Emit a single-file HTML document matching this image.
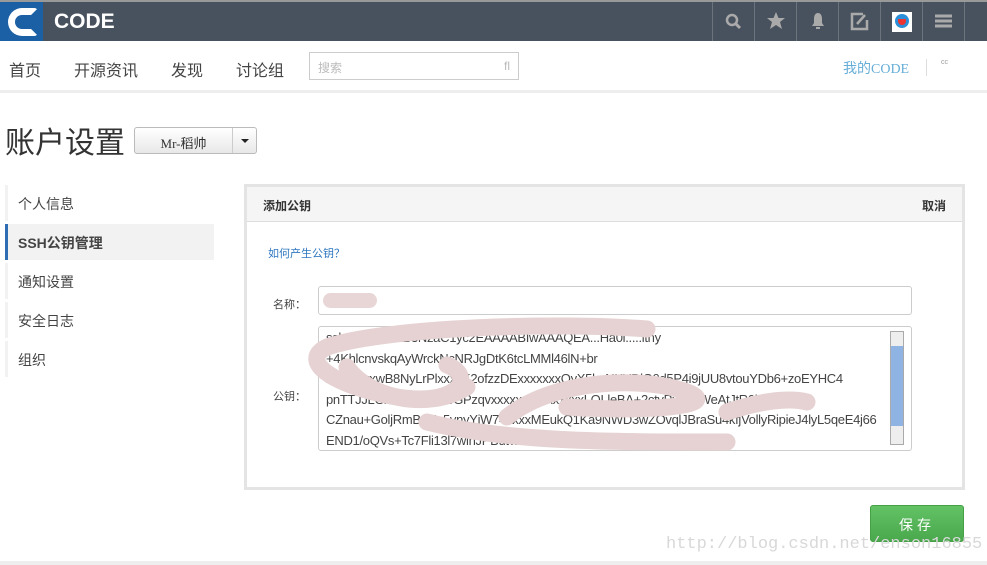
<!DOCTYPE html>
<html><head><meta charset="utf-8"><style>
*{margin:0;padding:0;box-sizing:border-box}
body{width:987px;height:565px;background:#fff;font-family:"Liberation Sans","Noto Sans CJK SC",sans-serif;position:relative;overflow:hidden;color:#333}
.abs{position:absolute}
#top{left:0;top:0;width:987px;height:41px;background:#48525e;border-top:2px solid #999}
.cell{position:absolute;top:0;width:42px;height:39px;border-left:1px solid #6b737d}
#nav2{left:0;top:41px;width:987px;height:52px;border-bottom:3px solid #eee}
.n{position:absolute;top:16px;font-size:16px;color:#444}
.side{position:absolute;left:5px;width:209px;height:36px;font-size:14px;color:#444;padding:9px 0 0 10px;border-left:3px solid #f2f2f2}
</style></head><body>
<div id="top" class="abs">
 <div class="abs" style="left:0;top:0;width:43px;height:39px;background:#1b5fa5"></div>
 <div class="abs" style="left:8px;top:6px;width:30px;height:28px;border:7px solid #fff;border-right-color:transparent;border-radius:15px 4px 4px 15px"></div>
 <div class="abs" style="left:54px;top:8px;font-size:21px;font-weight:bold;color:#fff;letter-spacing:0px">CODE</div>
 <div class="cell" style="left:712px"><svg width="42" height="39"><circle cx="19" cy="18" r="5" fill="none" stroke="#aaa" stroke-width="2.5"/><path d="M23 22l4 4" stroke="#aaa" stroke-width="3"/></svg></div>
 <div class="cell" style="left:754px"><svg width="42" height="39"><path d="M21 10l2.5 6h6.5l-5 4 2 7-6-4-6 4 2-7-5-4h6.5z" fill="#aaa"/></svg></div>
 <div class="cell" style="left:796px"><svg width="42" height="39"><path d="M21 11c-3 0-4 3-4 6v4l-2 3h12l-2-3v-4c0-3-1-6-4-6zM19 25h4v2h-4z" fill="#aaa"/></svg></div>
 <div class="cell" style="left:838px"><svg width="42" height="39"><path d="M24 12h-11v15h15v-9" fill="none" stroke="#aaa" stroke-width="2.5"/><path d="M18 22l8-9" stroke="#aaa" stroke-width="2.5"/></svg></div>
 <div class="cell" style="left:880px"><div class="abs" style="left:11px;top:10px;width:20px;height:20px;background:#fff"><div class="abs" style="left:3px;top:2px;width:14px;height:14px;border-radius:7px;background:#2a8fd8"></div><div class="abs" style="left:6px;top:7px;width:8px;height:6px;border-radius:0 0 4px 4px;background:#e33"></div></div></div>
 <div class="cell" style="left:922px"><svg width="42" height="39"><path d="M12 14h17M12 19h17M12 24h17" stroke="#aaa" stroke-width="3"/></svg></div>
 <div class="cell" style="left:964px"></div>
</div>
<div id="nav2" class="abs">
 <div class="n" style="left:9px">首页</div><div class="n" style="left:74px">开源资讯</div><div class="n" style="left:171px">发现</div><div class="n" style="left:236px">讨论组</div>
 <div class="abs" style="left:309px;top:11px;width:210px;height:28px;border:1px solid #ccc;font-size:12px;color:#bbb;padding:6px 8px">搜索<span style="float:right">fl</span></div>
 <div class="abs" style="left:843px;top:17px;font-size:14px;color:#66aed8;font-family:'Liberation Serif','Noto Sans CJK SC',serif">我的CODE</div>
 <div class="abs" style="left:926px;top:18px;width:1px;height:17px;background:#ddd"></div>
 <div class="abs" style="left:941px;top:18px;font-size:7px;color:#999">cc</div>
</div>
<div class="abs" style="left:5px;top:118px;font-size:30px;color:#333">账户设置</div>
<div class="abs" style="left:134px;top:127px;width:123px;height:27px;border:1px solid #bbb;border-radius:3px;background:linear-gradient(#fff,#e8e8e8)">
 <div class="abs" style="left:0;top:5px;width:97px;text-align:center;font-size:13px;font-family:'Liberation Serif','Noto Sans CJK SC',serif">Mr-稻帅</div>
 <div class="abs" style="left:97px;top:0;width:1px;height:25px;background:#ccc"></div>
 <div class="abs" style="left:106px;top:11px;border:4px solid transparent;border-top:4px solid #222"></div>
</div>
<div class="side" style="top:185px">个人信息</div>
<div class="side" style="top:224px;background:#f2f2f2;border-left-color:#2e6db4;font-weight:bold">SSH公钥管理</div>
<div class="side" style="top:263px">通知设置</div>
<div class="side" style="top:302px">安全日志</div>
<div class="side" style="top:341px">组织</div>
<div class="abs" style="left:244px;top:184px;width:721px;height:306px;border:3px solid #e4e4e4">
 <div class="abs" style="left:0;top:0;width:715px;height:35px;background:#f5f5f5;border-bottom:1px solid #ddd;font-size:12px;font-weight:bold;padding:10px 16px">添加公钥<span style="float:right;font-weight:bold">取消</span></div>
 <div class="abs" style="left:21px;top:58px;font-size:11px;color:#2f77c0">如何产生公钥？</div>
 <div class="abs" style="left:26px;top:109px;font-size:11px;color:#444">名称：</div>
 <div class="abs" style="left:71px;top:99px;width:594px;height:29px;border:1px solid #ccc;border-radius:3px"><div class="abs" style="left:4px;top:6px;width:54px;height:15px;border-radius:8px;background:#e8d6d6"></div></div>
 <div class="abs" style="left:26px;top:201px;font-size:11px;color:#444">公钥：</div>
 <div class="abs" style="left:71px;top:139px;width:594px;height:125px;border:1px solid #ccc;border-radius:3px;overflow:hidden;font-size:13px;line-height:20.5px;color:#444;padding:1px 0 0 7px;letter-spacing:-0.3px;white-space:nowrap">
  ssh-rsa AAAAB3NzaC1yc2EAAAABIwAAAQEA...Ha0i.....ltny<br>+4KhlcnvskqAyWrckNcNRJgDtK6tcLMMl46lN+br<br>xxxxxxxxwB8NyLrPlxxxxK2ofzzDExxxxxxxQyX5keNKYDlO0d5P4i9jUU8vtouYDb6+zoEYHC4<br>pnTTJJLGxxxxxxxxxxbGPzqvxxxxxxxxxxxxxxxLOLleBA+2ctyPxxxBWeAtJtR0ius<br>CZnau+GoljRmBuXo5ynyYjW74xxxxMEukQ1Ka9NWD3wZOvqlJBraSu4kfjVollyRipieJ4lyL5qeE4j66<br>END1/oQVs+Tc7Fli13l7wlnJPButvXXHhOxxxxxxxxxxxxxxxxxx
  <div class="abs" style="left:571px;top:4px;width:14px;height:114px;background:#eee;border:1px solid #aaa"><div class="abs" style="left:0;top:14px;width:12px;height:80px;background:#8fb4e3"></div></div>
 </div>
 <svg class="abs" style="left:60px;top:130px" width="620" height="140"><g fill="none" stroke="#e6d2d2" stroke-width="17" stroke-linecap="round"><path d="M340 12C250 5 80 10 20 30C-10 45 30 70 90 80C150 90 170 60 140 48"/><path d="M40 50C60 80 120 95 160 70"/><path d="M200 100C250 60 340 60 380 75C420 90 330 95 260 90"/><path d="M420 95C450 85 480 80 500 85"/><path d="M120 105C200 125 300 125 420 125"/></g></svg>
</div>
<div class="abs" style="left:870px;top:505px;width:94px;height:37px;border-radius:3px;background:linear-gradient(#62c264,#4aa84d);border:1px solid #45a046;color:#fff;font-size:14px;text-align:center;padding-top:9px;letter-spacing:4px">保存</div>
<div class="abs" style="left:666px;top:535px;font-size:17px;color:#d8d8d8;font-family:'Liberation Mono',monospace">http://blog.csdn.net/enson16855</div>
<div class="abs" style="left:0;top:561px;width:987px;height:4px;background:#eee"></div>
</body></html>
